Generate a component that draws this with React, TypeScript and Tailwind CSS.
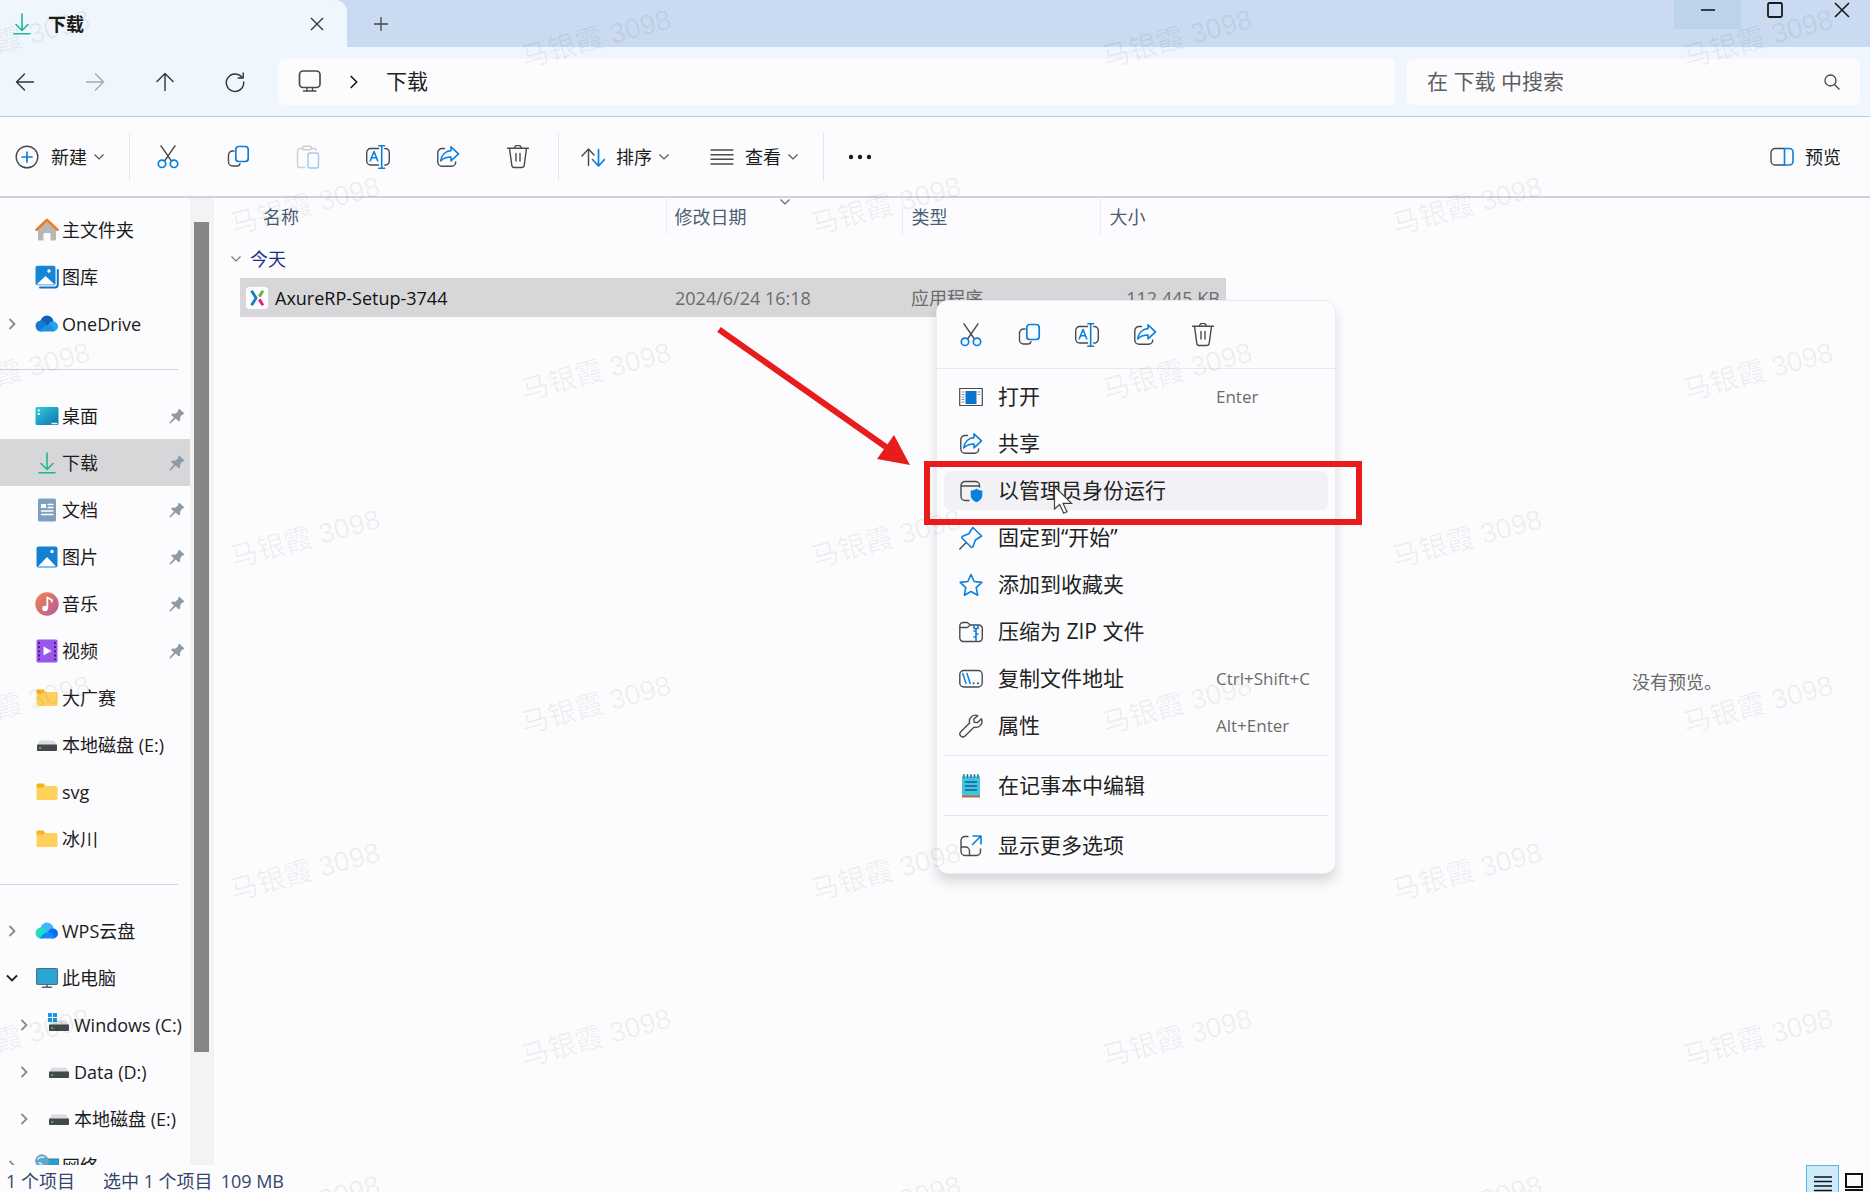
import type { ReactNode } from 'react';

// Types
type SidebarItem = {
  label: string;
  icon: ReactNode;
  expand?: 'closed' | 'open';
  pinned?: boolean;
  active?: boolean;
  child?: boolean;
};

type MenuItem = {
  label: string;
  icon: ReactNode;
  shortcut?: string;
  active?: boolean;
};

// Icons
const INK = '#4a4a4a';
const BLUE = '#0a7fdc';

const Svg = ({ children, className = 'size-6' }: { children: ReactNode; className?: string }) => (
  <svg
    viewBox="0 0 24 24"
    fill="none"
    stroke={INK}
    strokeWidth={1.4}
    strokeLinecap="round"
    strokeLinejoin="round"
    aria-hidden="true"
    className={`shrink-0 ${className}`}
  >
    {children}
  </svg>
);

const ChevronDown = ({ className = 'size-3' }: { className?: string }) => (
  <svg viewBox="0 0 12 12" fill="none" stroke="currentColor" strokeWidth={1.2} aria-hidden="true" className={`shrink-0 ${className}`}>
    <path d="M1.5 3.5L6 8l4.500-4.500" />
  </svg>
);

const CutIcon = () => (
  <Svg>
    <path d="M5 .8L15.4 16M19 .8L8.6 16" />
    <g stroke={BLUE} strokeWidth={1.7}>
      <circle cx="6" cy="18.8" r="3.7" />
      <circle cx="18" cy="18.8" r="3.7" />
    </g>
  </Svg>
);

const CopyIcon = () => (
  <Svg>
    <path d="M8 6H6.5a4 4 0 0 0-4 4v7a4 4 0 0 0 4 4H11a3 3 0 0 0 3-2.3" />
    <rect x="9.8" y="1.5" width="12.4" height="15" rx="3" stroke={BLUE} strokeWidth={1.7} />
  </Svg>
);

const PasteIcon = () => (
  <Svg>
    <g stroke="#d0d0c8">
      <path d="M7 3.500H4a2.500 2.500 0 0 0-2.500 2.500v14A2.500 2.500 0 0 0 4 22.500h4.500M16 3.500h2a2 2 0 0 1 2 2" />
      <rect x="6.5" y="1.2" width="9" height="3.6" rx="1.8" />
    </g>
    <rect x="12" y="8" width="10.5" height="15" rx="2" stroke="#a0caf3" />
  </Svg>
);

const RenameIcon = () => (
  <Svg>
    <path d="M12.5 3.500H4.700a4 4 0 0 0-4 4V16a4 4 0 0 0 4 4h7.800M18.800 3.500a4 4 0 0 1 4.500 4V16a4 4 0 0 1-4.500 4" />
    <path
      d="M4.300 15.700L8 6.500l3.700 9.200M5.500 12.700h5M15.700 .8v22.400M12.800 .8h5.800M12.800 23.200h5.800"
      stroke={BLUE}
      strokeWidth={1.6}
    />
  </Svg>
);

const ShareIcon = () => (
  <Svg>
    <path d="M8.500 3.500H6a4.200 4.200 0 0 0-4.200 4.200V17A4.200 4.200 0 0 0 6 21.200h9.500a4.200 4.200 0 0 0 4.200-4.200" />
    <path d="M15 1.800l7.500 7-7.500 7V12c-4.500 0-7.500 1-10.300 4C5.400 10 9.400 6 15 5.600z" stroke={BLUE} strokeWidth={1.6} />
  </Svg>
);

const TrashIcon = () => (
  <Svg>
    <path d="M1.500 3.300h21M8.500 3.300a3.500 3 0 0 1 7 0M3.500 3.300l2.300 17a2.600 2.600 0 0 0 2.600 2.200h7.200a2.600 2.600 0 0 0 2.600-2.200l2.300-17M10 8.500V16M14 8.500V16" />
  </Svg>
);

const OpenIcon = () => (
  <Svg>
    <rect x=".7" y="3.5" width="22.600" height="17" strokeWidth={1.2} fill="#fff" />
    <rect x="6.5" y="6" width="11" height="13" fill="#0a74cf" stroke="none" />
    <path d="M3 7h2M3 9.500h2M3 12h2M3 14.500h2M3 17h2M19 7h2M19 9.500h2" stroke="#888" strokeWidth={1} />
  </Svg>
);

const AdminIcon = () => (
  <Svg>
    <path d="M10 21.500H6a4 4 0 0 1-4-4v-11a4 4 0 0 1 4-4h10.500a4 4 0 0 1 4 4V8M2.300 7h18" />
    <path
      d="M17.500 9.500c1.500 1.500 3.500 2 5.800 2V16c0 3.500-2.500 6-5.800 7.300-3.300-1.300-5.800-3.800-5.800-7.300v-4.500c2.300 0 4.300-.5 5.800-2z"
      fill={BLUE}
      stroke="none"
    />
  </Svg>
);

const PinMenuIcon = () => (
  <Svg>
    <path d="M.8 23l6.500-6.500" />
    <path
      d="M13.800 1.500l8.800 8.500-6.200 4-2.400 6.500a1.300 1.300 0 0 1-2.100.5l-8.700-8.700a1.300 1.300 0 0 1 .5-2.100l6.100-2.400z"
      stroke={BLUE}
      strokeWidth={1.6}
    />
  </Svg>
);

const StarIcon = () => (
  <Svg>
    <path
      d="M12 1.500l3.200 7 7.600.9-5.600 5.200 1.500 7.600-6.700-3.700-6.700 3.700 1.500-7.600-5.600-5.200 7.600-.9z"
      stroke={BLUE}
      strokeWidth={1.6}
    />
  </Svg>
);

const ZipIcon = () => (
  <Svg>
    <path d="M.8 6a3.500 3.500 0 0 1 3.500-3.500h4l3 2.500h8.500a3.500 3.500 0 0 1 3.500 3.500V18a3.500 3.500 0 0 1-3.500 3.500H4.300A3.500 3.500 0 0 1 .8 18zM.8 7.500h7.500l3-2.500" />
    <path d="M15 5.500v3h4v-3M17 9v2h-2M17 11v3h2M17 14v3h-2M17 17v4" stroke={BLUE} strokeWidth={1.6} />
  </Svg>
);

const PathIcon = () => (
  <Svg>
    <rect x=".8" y="3.5" width="22.400" height="16.500" rx="4" />
    <path d="M3.800 6.500L7 16.500M8 6.500l3.200 10" stroke={BLUE} strokeWidth={1.5} />
    <path d="M14.500 16.300h.3M18.800 16.300h.3" stroke={BLUE} strokeWidth={2} />
  </Svg>
);

const WrenchIcon = () => (
  <Svg>
    <path d="M18.800 1.600a6.200 6.200 0 0 0-8.200 7.400l-8.800 8.800a2.900 2.900 0 0 0 4.200 4.200l9-8.800a6.200 6.200 0 0 0 7.500-8.400l-3.900 3.800-3.400-.4-.4-3.200z" />
  </Svg>
);

const NotepadIcon = () => (
  <Svg>
    <rect x="3" y="21" width="18" height="2.500" fill="#b56a3c" stroke="none" />
    <path d="M3 2.500h18v18a1 1 0 0 1-1 1H4a1 1 0 0 1-1-1z" fill="#42c3de" stroke="none" />
    <path d="M5 .8v2.500M8.500 .8v2.500M12 .8v2.500M15.500 .8v2.500M19 .8v2.500" stroke="#1b6f8a" strokeWidth={1.5} />
    <path d="M6.500 8h11M6.500 12h11M6.500 16h11" stroke="#0b5d96" strokeWidth={1.5} />
  </Svg>
);

const MoreOptionsIcon = () => (
  <Svg>
    <path d="M9 2.500H6a4 4 0 0 0-4 4v11a4 4 0 0 0 4 4h11.500a4 4 0 0 0 4-4V15M2 13h4.500a4 4 0 0 1 4 4v4.500" />
    <path d="M14 2h8v8M21.500 2.500l-8 8" stroke={BLUE} strokeWidth={1.6} />
  </Svg>
);

const DownloadIcon = () => (
  <Svg>
    <path d="M12 2v16M6 12.500l6 6 6-6M4 21.800h16" stroke="#1fb694" strokeWidth={1.6} />
  </Svg>
);

const HomeIcon = () => (
  <Svg>
    <path
      d="M3 11.500L12 3l9 8.500V21a1.500 1.500 0 0 1-1.500 1.500h-4V16a1 1 0 0 0-1-1h-5a1 1 0 0 0-1 1v6.500h-4A1.500 1.500 0 0 1 3 21z"
      fill="#b9b7b5"
      stroke="none"
    />
    <path d="M1.600 11.800L12 1.900l10.400 9.900" stroke="#f07a22" strokeWidth={2.6} />
  </Svg>
);

const GalleryIcon = () => (
  <Svg>
    <path d="M22.800 5v14.500a3 3 0 0 1-3 3H5" stroke="#1373c4" strokeWidth={2} />
    <rect x=".5" y=".8" width="20" height="19.500" rx="2" fill="#1585d6" stroke="none" />
    <path d="M1.500 19.500l9-8.500 9 8.500z" fill="#fff" stroke="none" />
    <circle cx="14" cy="6" r="1.7" fill="#fff" stroke="none" />
  </Svg>
);

const CloudIcon = ({ wps = false }: { wps?: boolean }) => (
  <Svg>
    <g stroke="none">
      <circle cx="12" cy="10" r="6.5" fill={wps ? '#39b7fb' : '#0f62b4'} />
      <circle cx="6" cy="14" r="5.5" fill={wps ? '#25dbc6' : '#1479cf'} />
      <circle cx="18" cy="14.5" r="5" fill={wps ? '#0a6cf2' : '#2aa3ee'} />
      <path d="M5 19.500c2-5 7-8 13-5l1 5z" fill={wps ? '#1289f7' : '#1f91e4'} />
    </g>
  </Svg>
);

const DesktopIcon = () => (
  <Svg>
    <defs>
      <linearGradient id="desk" x1="0" y1="0" x2="1" y2="1">
        <stop offset="0" stopColor="#2fcfdb" />
        <stop offset="1" stopColor="#0f6fb0" />
      </linearGradient>
    </defs>
    <rect x=".5" y="3" width="23" height="18" rx="1.5" fill="url(#desk)" stroke="none" />
    <path d="M3.500 6.500h.6M3.500 10h.6" stroke="#fff" strokeWidth={1.8} />
    <path d="M17 19.500h5" stroke="#d8f0fb" />
  </Svg>
);

const DocumentIcon = () => (
  <Svg>
    <rect x="3" y=".5" width="18" height="23" rx="1.5" fill="#7f9fbf" stroke="none" />
    <rect x="6" y="6" width="5" height="4" fill="#fff" stroke="none" />
    <path d="M13 6.500h5M13 9.500h5M6.500 13H18M6.500 16.500H18" stroke="#fff" strokeWidth={1.3} />
  </Svg>
);

const PictureIcon = () => (
  <Svg>
    <rect x="1.5" y="1.5" width="21" height="21" rx="2" fill="#1480d3" stroke="none" />
    <path d="M3 21.500l9-9.500 9 9.500z" fill="#fff" stroke="none" />
    <circle cx="17" cy="6.5" r="1.7" fill="#fff" stroke="none" />
  </Svg>
);

const MusicIcon = () => (
  <Svg>
    <defs>
      <linearGradient id="music" x1="0" y1="0" x2="1" y2="1">
        <stop offset="0" stopColor="#f0864e" />
        <stop offset="1" stopColor="#b65a9c" />
      </linearGradient>
    </defs>
    <circle cx="12" cy="12" r="11.7" fill="url(#music)" stroke="none" />
    <circle cx="10" cy="16.5" r="2.8" fill="#fff" stroke="none" />
    <path d="M12.300 16V5.500L16.800 8v1.500" stroke="#fff" strokeWidth={1.8} />
  </Svg>
);

const VideoIcon = () => (
  <Svg>
    <rect x="1.5" y=".5" width="21" height="23" rx="1.5" fill="#9a55ec" stroke="none" />
    <path d="M4 3v18M20 3v18" stroke="#3d1a72" strokeWidth={2} strokeDasharray="1.8 2.4" strokeLinecap="butt" />
    <path d="M8.500 7.500l8 4.500-8 4.500z" fill="#fff" stroke="none" />
  </Svg>
);

const FolderIcon = () => (
  <Svg>
    <path d="M1.500 6H21a1.500 1.500 0 0 1 1.500 1.500v11A1.500 1.500 0 0 1 21 20H3a1.500 1.500 0 0 1-1.500-1.500z" fill="#ffd05a" stroke="none" />
    <path d="M1.500 7.500V5A1.500 1.500 0 0 1 3 3.500h5.500l1.500 2-1.500 2z" fill="#f5b21c" stroke="none" />
  </Svg>
);

const DriveIcon = ({ system = false }: { system?: boolean }) => (
  <Svg>
    <path d="M5 7.500h14l3 4.500H2z" fill="#dcdde0" stroke="none" />
    <rect x="2" y="11.5" width="20" height="6.5" rx=".8" fill="#45474b" stroke="none" />
    <path d="M4.800 15h.8" stroke="#3ddc5c" strokeWidth={1.6} />
    {system && <path d="M1 0h4v4H1zM6 0h4v4H6zM1 5h4v4H1zM6 5h4v4H6z" fill="#1b95e0" stroke="none" />}
  </Svg>
);

const ComputerIcon = () => (
  <Svg>
    <rect x="1.5" y="2.5" width="21" height="16" rx=".8" fill="#2ba4d0" stroke="#4c6e80" strokeWidth={1} />
    <path d="M12 19v2M7.500 21.300h9" stroke="#50626c" strokeWidth={1.6} />
  </Svg>
);

const NetworkIcon = () => (
  <Svg>
    <rect x="8" y="5" width="16" height="12" fill="#23a0cf" stroke="#3c7894" strokeWidth={1} />
    <circle cx="7" cy="7" r="6.3" fill="#5aa9cf" stroke="#8a9aa5" strokeWidth={1} />
    <path d="M3 5c2-3 4-1 6-2M4 9c2 0 3 1 3 3" stroke="#d9eef8" />
  </Svg>
);

const PinIcon = () => (
  <svg viewBox="0 0 16 16" aria-hidden="true" className="size-4 shrink-0">
    <path
      d="M10 .5l5.500 5-1.500 1-1 .2-2 3 .2 2.500-1.300 1.300-3.200-3-5.200 5-1-.2.200-1L5 9.500 2 6.800l1.500-1.300 2.700.2L9 3.500v-1z"
      fill="#8e9aa5"
    />
  </svg>
);

const AxureIcon = () => (
  <Svg className="size-[22px]">
    <rect x="0" y="0" width="24" height="24" rx="4" fill="#fff" stroke="none" />
    <g strokeWidth={3.2} strokeLinecap="butt">
      <path d="M6 4l5 8-5 8" stroke="#1682c5" />
      <path d="M18.500 4l-4 6.500" stroke="#6cb33f" />
      <path d="M14.500 13.500l4 6.500" stroke="#e6168b" />
    </g>
  </Svg>
);

// Data
const HOME_ITEMS: SidebarItem[] = [
  { label: '主文件夹', icon: <HomeIcon /> },
  { label: '图库', icon: <GalleryIcon /> },
  { label: 'OneDrive', icon: <CloudIcon />, expand: 'closed' },
];

const QUICK_ITEMS: SidebarItem[] = [
  { label: '桌面', icon: <DesktopIcon />, pinned: true },
  { label: '下载', icon: <DownloadIcon />, pinned: true, active: true },
  { label: '文档', icon: <DocumentIcon />, pinned: true },
  { label: '图片', icon: <PictureIcon />, pinned: true },
  { label: '音乐', icon: <MusicIcon />, pinned: true },
  { label: '视频', icon: <VideoIcon />, pinned: true },
  { label: '大广赛', icon: <FolderIcon /> },
  { label: '本地磁盘 (E:)', icon: <DriveIcon /> },
  { label: 'svg', icon: <FolderIcon /> },
  { label: '冰川', icon: <FolderIcon /> },
];

const DEVICE_ITEMS: SidebarItem[] = [
  { label: 'WPS云盘', icon: <CloudIcon wps />, expand: 'closed' },
  { label: '此电脑', icon: <ComputerIcon />, expand: 'open' },
  { label: 'Windows (C:)', icon: <DriveIcon system />, expand: 'closed', child: true },
  { label: 'Data (D:)', icon: <DriveIcon />, expand: 'closed', child: true },
  { label: '本地磁盘 (E:)', icon: <DriveIcon />, expand: 'closed', child: true },
  { label: '网络', icon: <NetworkIcon />, expand: 'closed' },
];

const MENU_ITEMS: MenuItem[] = [
  { label: '打开', icon: <OpenIcon />, shortcut: 'Enter' },
  { label: '共享', icon: <ShareIcon /> },
  { label: '以管理员身份运行', icon: <AdminIcon />, active: true },
  { label: '固定到“开始”', icon: <PinMenuIcon /> },
  { label: '添加到收藏夹', icon: <StarIcon /> },
  { label: '压缩为 ZIP 文件', icon: <ZipIcon /> },
  { label: '复制文件地址', icon: <PathIcon />, shortcut: 'Ctrl+Shift+C' },
  { label: '属性', icon: <WrenchIcon />, shortcut: 'Alt+Enter' },
];

const FILE_ACTIONS = [
  { label: '剪切', icon: <CutIcon /> },
  { label: '复制', icon: <CopyIcon /> },
  { label: '粘贴', icon: <PasteIcon />, disabled: true },
  { label: '重命名', icon: <RenameIcon /> },
  { label: '共享', icon: <ShareIcon /> },
  { label: '删除', icon: <TrashIcon /> },
];

const MENU_ACTIONS = FILE_ACTIONS.filter((action) => !action.disabled);

const WATERMARK = { text: '马银霞 3098', stepX: 581, stepY: 333 };

// Window frame
const TitleBar = () => (
  <header className="flex h-[47px] shrink-0 items-stretch bg-[#c9daf1]">
    <div className="flex w-[347px] items-center rounded-tr-xl bg-[#f0f6fe] pl-2.5 pr-[22px]">
      <DownloadIcon />
      <span className="ml-3.5 flex-1 text-lg font-bold">下载</span>
      <button type="button" aria-label="关闭标签页" className="size-4">
        <svg viewBox="0 0 16 16" stroke="#333" strokeWidth={1.3} className="size-4">
          <path d="M2 2l12 12M14 2L2 14" />
        </svg>
      </button>
    </div>
    <button type="button" aria-label="新建标签页" className="ml-[26px] size-4 self-center">
      <svg viewBox="0 0 16 16" stroke="#444" strokeWidth={1.3} className="size-4">
        <path d="M8 1v14M1 8h14" />
      </svg>
    </button>
    <div className="-mr-[5px] ml-auto flex h-[29px]">
      <button type="button" aria-label="最小化" className="flex w-[67px] justify-center bg-[#bdd3ea] pt-0.5">
        <svg viewBox="0 0 16 16" stroke="#1a1a1a" strokeWidth={1.6} className="size-4">
          <path d="M1 8h14" />
        </svg>
      </button>
      <button type="button" aria-label="最大化" className="flex w-[67px] justify-center pt-0.5">
        <svg viewBox="0 0 16 16" fill="none" stroke="#1a1a1a" strokeWidth={1.8} className="size-4">
          <rect x="1" y="1" width="14" height="14" rx="1.5" />
        </svg>
      </button>
      <button type="button" aria-label="关闭" className="flex w-[67px] justify-center pt-0.5">
        <svg viewBox="0 0 16 16" stroke="#1a1a1a" strokeWidth={1.6} className="size-4">
          <path d="M1 1l14 14M15 1L1 15" />
        </svg>
      </button>
    </div>
  </header>
);

const NavigationBar = () => (
  <div className="flex h-[70px] shrink-0 items-center border-b border-[#b3d3e4] bg-[#f0f6fe] pl-[13px] pr-2.5">
    <div className="flex gap-[46px]">
      <button type="button" aria-label="后退">
        <Svg>
          <path d="M20.500 12h-17M11.500 4l-8 8 8 8" stroke="#333" />
        </Svg>
      </button>
      <button type="button" aria-label="前进" disabled>
        <Svg>
          <path d="M3.500 12h17M12.500 4l8 8-8 8" stroke="#a9a9ae" />
        </Svg>
      </button>
      <button type="button" aria-label="向上">
        <Svg>
          <path d="M12 20.500v-17M4 11.500l8-8 8 8" stroke="#333" />
        </Svg>
      </button>
      <button type="button" aria-label="刷新">
        <Svg>
          <path d="M19 7.500A8.700 8.700 0 1 0 20.700 12M20.200 3v5h-5" stroke="#333" />
        </Svg>
      </button>
    </div>
    <nav aria-label="地址栏" className="ml-[31px] flex h-[46px] flex-1 items-center rounded-md bg-[#fcfcfe] pl-5">
      <a href="#this-pc" aria-label="此电脑">
        <Svg>
          <rect x="1.5" y="1" width="20.500" height="16.500" rx="3.5" strokeWidth={1.7} />
          <path d="M9 17.500v3M14.500 17.500v3M5.500 21H18" />
        </Svg>
      </a>
      <ChevronDown className="ml-6 size-4 -rotate-90" />
      <a href="#downloads" className="ml-6 text-[21px] text-[#222]">下载</a>
    </nav>
    <label className="ml-3 flex h-[46px] w-[453px] items-center rounded-md bg-[#fcfcfe] px-5">
      <input
        type="search"
        aria-label="搜索"
        placeholder="在 下载 中搜索"
        className="min-w-0 flex-1 bg-transparent text-[21px] outline-none placeholder:text-[#5f5f5f]"
      />
      <svg viewBox="0 0 16 16" fill="none" stroke="#444" strokeWidth={1.3} aria-hidden="true" className="size-4">
        <circle cx="6.5" cy="6.5" r="5.5" />
        <path d="M10.500 10.500l5 5" />
      </svg>
    </label>
  </div>
);

const Separator = () => <span className="h-12 w-px bg-[#e6e6ea]" />;

const Toolbar = () => (
  <div className="flex h-[81px] shrink-0 items-center border-b-2 border-[#cdd2df] pl-[15px] pr-[29px] text-lg">
    <button type="button" className="mr-6 flex items-center">
      <Svg>
        <circle cx="12" cy="12" r="10.8" />
        <path d="M12 7v10M7 12h10" stroke={BLUE} strokeWidth={1.7} />
      </Svg>
      <span className="ml-3">新建</span>
      <ChevronDown className="ml-1.5 size-3 text-[#555]" />
    </button>
    <Separator />
    <div className="ml-[26px] mr-7 flex gap-[46px]">
      {FILE_ACTIONS.map((action) => (
        <button key={action.label} type="button" aria-label={action.label} disabled={action.disabled}>
          {action.icon}
        </button>
      ))}
    </div>
    <Separator />
    <button type="button" className="ml-[22px] flex items-center">
      <Svg>
        <path d="M7.500 20.500v-16M1 11l6.500-7 5.500 6" />
        <path d="M17.500 4.500v16M11.500 14.500l6 6.500 6-6.500" stroke={BLUE} strokeWidth={1.7} />
      </Svg>
      <span className="ml-[11px]">排序</span>
      <ChevronDown className="ml-1.5 size-3 text-[#555]" />
    </button>
    <button type="button" className="ml-10 mr-6 flex items-center">
      <Svg>
        <path d="M1 5h22M1 9.700h22M1 14.300h22M1 19h22" />
      </Svg>
      <span className="ml-[11px]">查看</span>
      <ChevronDown className="ml-1.5 size-3 text-[#555]" />
    </button>
    <Separator />
    <button type="button" aria-label="更多" className="ml-6">
      <Svg>
        <g fill="#1a1a1a" stroke="none">
          <circle cx="3" cy="12" r="2.2" />
          <circle cx="12" cy="12" r="2.2" />
          <circle cx="21" cy="12" r="2.2" />
        </g>
      </Svg>
    </button>
    <button type="button" className="ml-auto flex items-center gap-[11px]">
      <Svg>
        <path d="M14 3.500H5a4 4 0 0 0-4 4V16a4 4 0 0 0 4 4h9" />
        <path d="M14.500 3.500h5A3.500 3.500 0 0 1 23 7v9.500a3.500 3.500 0 0 1-3.500 3.500h-5z" stroke={BLUE} strokeWidth={1.6} />
      </Svg>
      预览
    </button>
  </div>
);

// Sidebar
const SidebarList = ({ items }: { items: SidebarItem[] }) => (
  <ul>
    {items.map((item) => (
      <li key={item.label}>
        <a
          href="#folder"
          aria-current={item.active ? 'page' : undefined}
          className={`flex h-[47px] items-center whitespace-nowrap pr-[5px] ${item.active ? 'bg-[#d7d7d9]' : ''} ${item.child ? 'pl-3' : ''}`}
        >
          <span className="mr-[11px] flex w-6 justify-center">
            {item.expand && (
              <svg
                viewBox="0 0 12 12"
                fill="none"
                stroke={item.expand === 'open' ? '#222' : '#8a8a8a'}
                strokeWidth={1.8}
                aria-hidden="true"
                className={`size-3 ${item.expand === 'open' ? 'rotate-90' : ''}`}
              >
                <path d="M3.500 1l5 5-5 5" />
              </svg>
            )}
          </span>
          {item.icon}
          <span className="ml-[3px] flex-1">{item.label}</span>
          {item.pinned && <PinIcon />}
        </a>
      </li>
    ))}
  </ul>
);

const SidebarDivider = () => (
  <div className="flex h-[45px] items-center pr-3">
    <span className="h-px w-full bg-[#d4d4d8]" />
  </div>
);

const Sidebar = () => (
  <aside className="flex w-[214px] shrink-0 overflow-hidden">
    <nav aria-label="导航窗格" className="w-[190px] pt-2 text-lg">
      <SidebarList items={HOME_ITEMS} />
      <SidebarDivider />
      <SidebarList items={QUICK_ITEMS} />
      <SidebarDivider />
      <SidebarList items={DEVICE_ITEMS} />
    </nav>
    <div className="flex-1 bg-[#f3f3f6] pl-1 pt-6">
      <div className="h-[88%] w-[15px] bg-[#868688]" />
    </div>
  </aside>
);

// File list
const FileTable = () => (
  <table className="ml-4 w-[996px] table-fixed self-start text-left text-lg">
    <colgroup>
      <col className="w-2.5" />
      <col className="w-[426px]" />
      <col className="w-[236px]" />
      <col className="w-[198px]" />
      <col className="w-[126px]" />
    </colgroup>
    <thead className="text-[#4c5c76]">
      <tr className="h-[37px]">
        <td />
        <th scope="col" className="border-r border-[#ececf3] p-0 pl-[23px] font-normal">名称</th>
        <th scope="col" className="relative border-r border-[#ececf3] p-0 pl-2 font-normal">
          修改日期
          <ChevronDown className="absolute -top-0.5 left-[112px] size-3 text-[#666]" />
        </th>
        <th scope="col" className="border-r border-[#ececf3] p-0 pl-[9px] font-normal">类型</th>
        <th scope="col" className="p-0 pl-[9px] font-normal">大小</th>
      </tr>
    </thead>
    <tbody>
      <tr className="h-[43px]">
        <th scope="rowgroup" colSpan={5} className="p-0 pt-1 font-normal text-[#1e2f86]">
          <button type="button" className="flex items-center gap-2">
            <ChevronDown className="size-3 text-[#777]" />
            今天
          </button>
        </th>
      </tr>
      <tr className="h-[39px] text-[#6b6b6b]">
        <td />
        <td className="bg-[#d7d7d9] p-0 pl-1.5 text-[#111]">
          <span className="flex items-center gap-[7px]">
            <AxureIcon />
            AxureRP-Setup-3744
          </span>
        </td>
        <td className="bg-[#d7d7d9] p-0 pl-[9px]">2024/6/24 16:18</td>
        <td className="bg-[#d7d7d9] p-0 pl-[9px]">应用程序</td>
        <td className="bg-[#d7d7d9] p-0 pr-1.5 text-right">112,445 KB</td>
      </tr>
    </tbody>
  </table>
);

const StatusBar = () => (
  <footer className="flex h-[27px] shrink-0 items-start pl-1.5 pr-1.5 text-lg leading-7 text-[#33466a]">
    <span className="pt-0.5">1 个项目</span>
    <span className="ml-7 pt-0.5">选中 1 个项目</span>
    <span className="ml-2 pt-0.5">109 MB</span>
    <button
      type="button"
      aria-label="详细信息"
      className="ml-auto flex h-8 w-[33px] justify-center border border-[#55b4ea] bg-[#cdeafb] pt-2"
    >
      <svg viewBox="0 0 18 18" stroke="#111" strokeWidth={1.6} className="size-[18px]">
        <path d="M0 3h18M0 7.500h18M0 12h18M0 16.500h18" />
      </svg>
    </button>
    <button type="button" aria-label="大图标" className="ml-[5px] pt-2">
      <svg viewBox="0 0 20 18" fill="none" stroke="#111" strokeWidth={2} className="h-[18px] w-5">
        <path d="M2 1h16v13H2zM1 17h18" />
      </svg>
    </button>
  </footer>
);

// Context menu
const MenuRow = ({ item }: { item: MenuItem }) => (
  <li className="h-[47px] px-[7px] py-1">
    <button
      type="button"
      role="menuitem"
      className={`flex h-full w-full items-center rounded-md pl-[15px] text-left ${item.active ? 'bg-[#f1f1f6]' : ''}`}
    >
      {item.icon}
      <span className="ml-[15px] flex-1 text-[21px]">{item.label}</span>
      {item.shortcut && <span className="w-28 text-[17px] text-[#6c6c6c]">{item.shortcut}</span>}
    </button>
  </li>
);

const MenuDivider = () => <li role="separator" className="mx-1.5 mb-1.5 mt-1 h-[3px] border-b border-[#e4e4f0]" />;

const ContextMenu = () => (
  <div className="absolute left-[936px] top-[300px] w-[400px] rounded-xl border border-[#ececf0] bg-[#fcfcfe] pb-1 text-[#222] shadow-[0_8px_12px_rgba(0,0,0,0.14)]">
    <div className="flex h-[68px] items-center gap-[34px] border-b border-[#e8e8ec] pl-[22px]">
      {MENU_ACTIONS.map((action) => (
        <button key={action.label} type="button" aria-label={action.label}>
          {action.icon}
        </button>
      ))}
    </div>
    <ul role="menu" className="pt-1">
      {MENU_ITEMS.map((item) => (
        <MenuRow key={item.label} item={item} />
      ))}
      <MenuDivider />
      <MenuRow item={{ label: '在记事本中编辑', icon: <NotepadIcon /> }} />
      <MenuDivider />
      <MenuRow item={{ label: '显示更多选项', icon: <MoreOptionsIcon /> }} />
    </ul>
  </div>
);

// Repeated name stamp, every other row is shifted by half a step
const Watermark = () => (
  <div aria-hidden="true" className="pointer-events-none absolute inset-0 overflow-hidden">
    {[...Array(8)].map((_, row) =>
      [...Array(4)].map((__, col) => (
        <span
          key={`mark-${row}-${col}`}
          className="absolute -translate-x-1/2 -translate-y-1/2 -rotate-[15deg] whitespace-nowrap font-['Liberation_Sans','Noto_Sans_CJK_SC',sans-serif] text-[28px] text-black/6"
          style={{
            left: 15 + col * WATERMARK.stepX + (row % 2) * 290,
            top: 39 + (row * WATERMARK.stepY) / 2,
          }}
        >
          {WATERMARK.text}
        </span>
      )),
    )}
  </div>
);

// Red pointer, frame and mouse cursor drawn over the menu
const Annotations = () => (
  <>
    <svg viewBox="0 0 200 144" aria-hidden="true" className="pointer-events-none absolute left-[714px] top-[323px] h-36 w-[200px]">
      <path d="M5 6.500L172 124" stroke="#e81c1c" strokeWidth={6} />
      <path d="M196 142l-33-6 17-24z" fill="#e81c1c" />
    </svg>
    <div className="pointer-events-none absolute left-[924px] top-[461px] h-16 w-[438px] border-6 border-[#e81c1c]" />
    <svg viewBox="0 0 20 30" aria-hidden="true" className="pointer-events-none absolute left-[1053px] top-[485px] h-[30px] w-5">
      <path d="M1.500 1.500V24l5.200-4.500 4 8.800 3.300-1.500-4-8.500h8.500z" fill="#fff" stroke="#444" strokeWidth={1.2} />
    </svg>
  </>
);

export default function App() {
  return (
    <div className="relative flex h-screen flex-col overflow-hidden bg-[#fcfcfe] font-['Open_Sans','Noto_Sans_CJK_SC',sans-serif] text-[#1b1b1b]">
      <TitleBar />
      <NavigationBar />
      <Toolbar />
      <div className="flex min-h-0 flex-1">
        <Sidebar />
        <main className="flex flex-1">
          <FileTable />
        </main>
        <section aria-label="预览" className="flex w-[386px] shrink-0 items-center justify-center text-lg text-[#6b6b6b]">
          没有预览。
        </section>
      </div>
      <StatusBar />
      <ContextMenu />
      <Watermark />
      <Annotations />
    </div>
  );
}
